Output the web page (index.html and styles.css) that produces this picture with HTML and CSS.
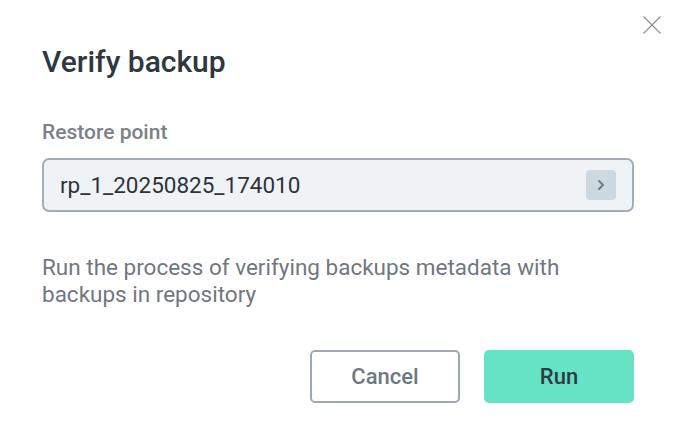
FILE: index.html
```html
<!DOCTYPE html>
<html lang="en">
<head>
<meta charset="utf-8">
<title>Verify backup</title>
<link rel="stylesheet" href="styles.css">
</head>
<body>
<div class="dialog">
  <button class="close" aria-label="Close">
    <svg width="18" height="18" viewBox="0 0 18 18"><path d="M0.5 0.5L17.5 17.5M17.5 0.5L0.5 17.5" stroke="#8d9298" stroke-width="1.2" fill="none"/></svg>
  </button>
  <h1 class="title">Verify backup</h1>
  <div class="field">
    <div class="label">Restore point</div>
    <div class="select">
      <span class="value">rp_1_20250825_174010</span>
      <span class="chev">
        <svg width="10" height="12" viewBox="0 0 10 12"><path d="M3 2L7 6L3 10" stroke="#6f7c86" stroke-width="2" fill="none" stroke-linecap="round" stroke-linejoin="round"/></svg>
      </span>
    </div>
  </div>
  <p class="desc">Run the process of verifying backups metadata with backups in repository</p>
  <div class="actions">
    <button class="btn cancel">Cancel</button>
    <button class="btn run">Run</button>
  </div>
</div>
</body>
</html>
```
FILE: styles.css
```css
html, body {
  margin: 0;
  padding: 0;
  background: #ffffff;
}
body {
  font-family: Roboto, "Liberation Sans", sans-serif;
  width: 677px;
  height: 440px;
  overflow: hidden;
}
.dialog {
  position: relative;
  padding: 44px 43px 0 42px;
  display: flex;
  flex-direction: column;
}
.close {
  position: absolute;
  top: 16px;
  left: 643px;
  width: 18px;
  height: 18px;
  padding: 0;
  border: 0;
  background: none;
  display: flex;
}
.title {
  margin: 0;
  font-size: 30px;
  font-weight: 500;
  line-height: 36px;
  color: #2f3740;
}
.field {
  margin-top: 40px;
  display: flex;
  flex-direction: column;
}
.label {
  font-size: 21px;
  font-weight: 500;
  line-height: 24px;
  color: #7b8189;
}
.select {
  margin-top: 14px;
  height: 54px;
  box-sizing: border-box;
  border: 2px solid #a3adb4;
  border-radius: 7px;
  background: #eff3f6;
  display: flex;
  align-items: center;
  justify-content: space-between;
  padding: 0 16px 0 16px;
}
.value {
  font-size: 22.5px;
  color: #2d333a;
}
.chev {
  width: 30px;
  height: 30px;
  border-radius: 4px;
  background: #cdd9e0;
  display: flex;
  align-items: center;
  justify-content: center;
}
.desc {
  margin: 42px 0 0 0;
  font-size: 22.5px;
  line-height: 27px;
  color: #71777f;
}
.actions {
  margin-top: 42px;
  display: flex;
  justify-content: flex-end;
  gap: 24px;
}
.btn {
  width: 150px;
  height: 53px;
  box-sizing: border-box;
  border-radius: 5px;
  font-family: Roboto, "Liberation Sans", sans-serif;
  font-size: 22px;
  font-weight: 500;
}
.cancel {
  border: 2px solid #9ea9b2;
  background: #ffffff;
  color: #6d7a84;
}
.run {
  border: 0;
  background: #66e3c5;
  color: #2f3a43;
}
```
